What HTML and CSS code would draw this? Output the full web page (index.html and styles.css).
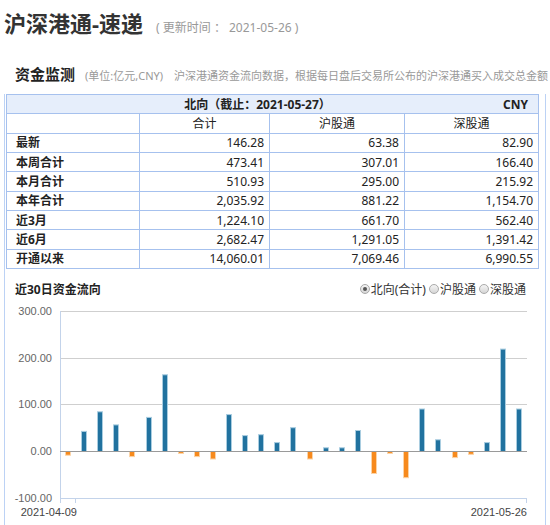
FILE: index.html
```html
<!DOCTYPE html>
<html lang="zh-CN">
<head>
<meta charset="utf-8">
<title>沪深港通-速递</title>
<link rel="stylesheet" href="styles.css">
</head>
<body>
<div class="page">
  <div class="title-row">
    <h1 class="title">沪深港通-速递</h1>
    <span class="update">( 更新时间 ： 2021-05-26 )</span>
  </div>
  <div class="monitor">
    <span class="monitor-title">资金监测</span>
    <span class="monitor-unit">(单位:亿元,CNY)</span>
    <span class="monitor-desc">沪深港通资金流向数据，根据每日盘后交易所公布的沪深港通买入成交总金额</span>
  </div>
  <div class="panel">
    <table class="flow-table">
      <colgroup>
        <col class="c1"><col class="c2"><col class="c3"><col class="c4">
      </colgroup>
      <tr class="head"><th colspan="4"><span class="cny">CNY</span>北向（截止：2021-05-27）</th></tr>
      <tr class="cols"><td></td><td>合计</td><td>沪股通</td><td>深股通</td></tr>
      <tr><td class="label">最新</td><td>146.28</td><td>63.38</td><td>82.90</td></tr>
      <tr><td class="label">本周合计</td><td>473.41</td><td>307.01</td><td>166.40</td></tr>
      <tr><td class="label">本月合计</td><td>510.93</td><td>295.00</td><td>215.92</td></tr>
      <tr><td class="label">本年合计</td><td>2,035.92</td><td>881.22</td><td>1,154.70</td></tr>
      <tr><td class="label">近3月</td><td>1,224.10</td><td>661.70</td><td>562.40</td></tr>
      <tr><td class="label">近6月</td><td>2,682.47</td><td>1,291.05</td><td>1,391.42</td></tr>
      <tr><td class="label">开通以来</td><td>14,060.01</td><td>7,069.46</td><td>6,990.55</td></tr>
    </table>
    <div class="chart-head">
      <span class="chart-title">近30日资金流向</span>
      <span class="radios">
        <span class="opt"><span class="radio checked"></span>北向(合计)</span>
        <span class="opt"><span class="radio"></span>沪股通</span>
        <span class="opt"><span class="radio"></span>深股通</span>
      </span>
    </div>
    <svg class="chart" width="540" height="225" viewBox="0 0 540 225" xmlns="http://www.w3.org/2000/svg">
      <g class="grid">
        <line x1="55" y1="10.5" x2="522" y2="10.5"/>
        <line x1="55" y1="57.5" x2="522" y2="57.5"/>
        <line x1="55" y1="103.5" x2="522" y2="103.5"/>
      </g>
      <g class="axis">
        <line x1="55.5" y1="10" x2="55.5" y2="198"/>
        <line x1="55" y1="197.5" x2="522" y2="197.5"/>
        <line x1="55.5" y1="197" x2="55.5" y2="202"/>
        <line x1="70.5" y1="197" x2="70.5" y2="202"/>
        <line x1="521.5" y1="197" x2="521.5" y2="202"/>
      </g>
      <g class="ylabels">
        <text x="47" y="14">300.00</text>
        <text x="47" y="61">200.00</text>
        <text x="47" y="107">100.00</text>
        <text x="47" y="154">0.00</text>
        <text x="47" y="201">-100.00</text>
      </g>
      <g class="bars">
        <rect class="neg" x="60.5" y="150.5" width="5" height="3.7"/>
        <rect class="pos" x="76.5" y="130.4" width="5" height="20.1"/>
        <rect class="pos" x="92.5" y="110.8" width="5" height="39.7"/>
        <rect class="pos" x="108.5" y="123.9" width="5" height="26.6"/>
        <rect class="neg" x="124.5" y="150.5" width="5" height="5.1"/>
        <rect class="pos" x="141.5" y="116.4" width="5" height="34.1"/>
        <rect class="pos" x="157.5" y="73.8" width="5" height="76.7"/>
        <rect class="neg" x="173.5" y="150.5" width="5" height="1.9"/>
        <rect class="neg" x="189.5" y="150.5" width="5" height="5.1"/>
        <rect class="neg" x="205.5" y="150.5" width="5" height="7.5"/>
        <rect class="pos" x="221.5" y="113.6" width="5" height="36.9"/>
        <rect class="pos" x="237.5" y="134.6" width="5" height="15.9"/>
        <rect class="pos" x="253.5" y="133.7" width="5" height="16.8"/>
        <rect class="pos" x="269.5" y="141.6" width="5" height="8.9"/>
        <rect class="pos" x="285.5" y="126.7" width="5" height="23.8"/>
        <rect class="neg" x="302.5" y="150.5" width="5" height="7.5"/>
        <rect class="pos" x="318.5" y="146.8" width="5" height="3.7"/>
        <rect class="pos" x="334.5" y="146.8" width="5" height="3.7"/>
        <rect class="pos" x="350.5" y="129.5" width="5" height="21.0"/>
        <rect class="neg" x="366.5" y="150.5" width="5" height="22.0"/>
        <rect class="neg" x="382.5" y="150.5" width="5" height="1.9"/>
        <rect class="neg" x="398.5" y="150.5" width="5" height="26.2"/>
        <rect class="pos" x="414.5" y="108.0" width="5" height="42.5"/>
        <rect class="pos" x="430.5" y="138.8" width="5" height="11.7"/>
        <rect class="neg" x="447.5" y="150.5" width="5" height="6.1"/>
        <rect class="neg" x="463.5" y="150.5" width="5" height="2.8"/>
        <rect class="pos" x="479.5" y="141.6" width="5" height="8.9"/>
        <rect class="pos" x="495.5" y="48.1" width="5" height="102.4"/>
        <rect class="pos" x="511.5" y="108.0" width="5" height="42.5"/>
      </g>
      <line class="zero" x1="55" y1="150.5" x2="522" y2="150.5"/>
      <g class="xlabels">
        <text x="72" y="215">2021-04-09</text>
        <text x="522" y="215">2021-05-26</text>
      </g>
    </svg>
  </div>
</div>
</body>
</html>
```

FILE: styles.css
```css
* { box-sizing: border-box; }
html, body { margin: 0; padding: 0; overflow: hidden; }
body {
  width: 550px;
  height: 525px;
  background: #fff;
  color: #333;
  font-family: "Noto Sans", "Noto Sans CJK SC", sans-serif;
  font-size: 12px;
}
.page { width: 550px; height: 525px; overflow: hidden; }

.title-row {
  display: flex;
  align-items: baseline;
  padding: 8px 0 0 4px;
  white-space: nowrap;
}
.title {
  margin: 0;
  font-size: 22px;
  line-height: 30px;
  font-weight: bold;
  color: #333;
}
.update { margin-left: 13px; font-size: 12px; color: #999; }

.monitor {
  margin-top: 26px;
  height: 20px;
  line-height: 20px;
  padding-left: 15px;
  white-space: nowrap;
  overflow: hidden;
  display: flex;
  align-items: baseline;
}
.monitor-title { font-size: 15px; font-weight: bold; color: #222; }
.monitor-unit { margin-left: 10px; font-size: 11px; color: #999; }
.monitor-desc { margin-left: 11px; font-size: 11px; color: #999; }

.panel {
  margin: 10px 0 0 4px;
  width: 542px;
  height: 440px;
  border: 1px solid #bcd2f5;
  border-top: none;
}

.flow-table {
  margin-left: 1px;
  width: 532px;
  border-collapse: collapse;
  table-layout: fixed;
}
.c1 { width: 133px; }
.c2 { width: 130px; }
.c3 { width: 135px; }
.c4 { width: 134px; }
.flow-table td, .flow-table th {
  border: 1px solid #a6c1ee;
  height: 19.33px;
  padding: 0 5px;
  font-size: 12px;
  line-height: 17px;
  color: #222;
  text-align: right;
  white-space: nowrap;
}
.flow-table .head th {
  background: #e6eefb;
  font-weight: bold;
  text-align: center;
}
.cny { float: right; margin-right: 5px; font-weight: bold; }
.flow-table .cols td { text-align: center; }
.flow-table td.label { text-align: left; padding-left: 9px; font-weight: bold; }

.chart-head {
  display: flex;
  justify-content: space-between;
  align-items: center;
  height: 23px;
  margin-top: 9px;
  padding: 0 19px 0 10px;
}
.chart-title { font-weight: bold; color: #222; }
.radios { display: flex; align-items: center; }
.opt { display: flex; align-items: center; margin-left: 3px; color: #333; }
.radio {
  display: inline-block;
  width: 10px;
  height: 10px;
  margin-right: 1px;
  border-radius: 50%;
  border: 1px solid #a9a9a9;
  background: linear-gradient(#f4f4f4, #d6d6d6);
  position: relative;
}
.radio.checked::after {
  content: "";
  position: absolute;
  left: 2px;
  top: 2px;
  width: 4px;
  height: 4px;
  border-radius: 50%;
  background: #555;
}

.chart { display: block; }
.grid line { stroke: #cfcfcf; stroke-width: 1; }
.axis line { stroke: #c3d3ea; stroke-width: 1; }
.zero { stroke: #9a9a9a; stroke-width: 1; }
.ylabels text {
  font-family: "Liberation Sans", sans-serif;
  font-size: 11px;
  fill: #666;
  text-anchor: end;
}
.xlabels text {
  font-family: "Liberation Sans", sans-serif;
  font-size: 11px;
  fill: #444;
  text-anchor: end;
}
.bars .pos { fill: #21729f; stroke: #a9cde0; stroke-width: 1; }
.bars .neg { fill: #f78a1d; stroke: #fcd3a6; stroke-width: 1; }
```
